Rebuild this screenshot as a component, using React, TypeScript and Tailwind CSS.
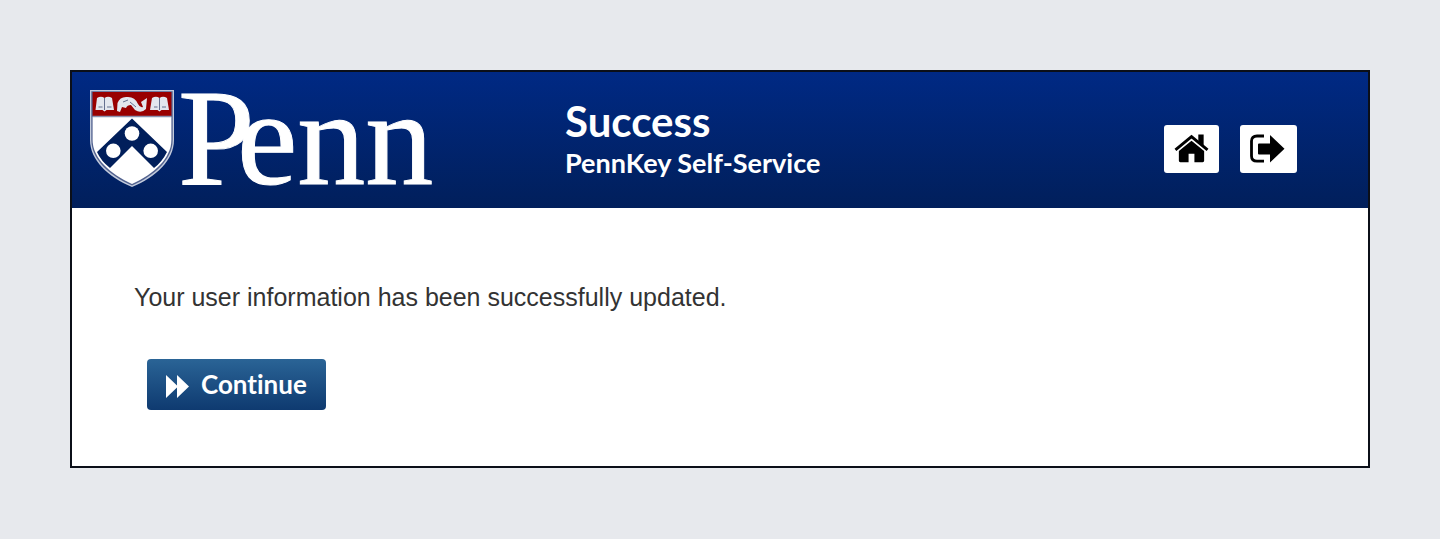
function Logo() {
  return (
    <svg viewBox="0 0 344 98" className="h-[98px] w-[344px] shrink-0 overflow-visible" role="img" aria-label="Penn">
      <path d="M0 -1H84V49C84 69 66 86 42 96C18 86 0 69 0 49Z" fill="#c3cbdc" />
      <path d="M1.3 .3H82.7V49C82.7 68 65 84.500 42 94.500C19 84.500 1.300 68 1.300 49Z" fill="#52628f" />
      <path d="M2.600 26H81.400V49C81.400 67 64 83 42 93C20 83 2.600 67 2.600 49Z" fill="#fff" />
      <path d="M2.600 1H81.400V25H2.600Z" fill="#990000" />
      <path d="M2.600 25.500H81.400" stroke="#8a93b0" strokeWidth="1.500" />
      <path d="M42 27.500L77 61Q72 71 64 77L42 55L20 77Q11 70 7 61Z" fill="#011f5b" />
      <g fill="#fff">
        <circle cx="42" cy="42.500" r="7.300" />
        <circle cx="23.300" cy="59.800" r="7.300" />
        <circle cx="60.700" cy="59.800" r="7.300" />
      </g>
      <g fill="#e3e7ee">
        <path d="M7 7Q11 4.500 14.500 7Q18 4.500 22 7L24 19H16.500L14.500 20.500L12.500 19H5.500Z" />
        <path d="M62 7Q66 4.500 69.500 7Q73 4.500 77 7L79 19H71.500L69.500 20.500L67.500 19H60Z" />
        <path d="M27 20L27.500 12Q30 5 38 6Q45 6 48 13Q50 17 53 16L51 11L57 7L56 18Q51 23 45 19L41 14Q37 14 36 17L32 16L30 21Z" />
      </g>
      <g stroke="#64708f" strokeWidth="1" fill="none">
        <path d="M14.500 7V19M69.500 7V19M8.500 16H12.500M17 16H21.500M64 16H67.500M72 16H76M33 11L38 9M40 11L46 16" />
      </g>
      <text
        x="88"
        y="93"
        fill="#fff"
        stroke="#fff"
        strokeWidth="1"
        className="font-['Liberation_Serif',serif]"
      >
        <tspan fontSize="138">P</tspan>
        <tspan x="147" fontSize="136">enn</tspan>
      </text>
    </svg>
  );
}

function HomeIcon() {
  return (
    <svg viewBox="0 0 36 30" className="h-[30px] w-9" aria-hidden="true">
      <path d="M5 17L18 6.500L31 17V27Q31 28.500 29.500 28.500H21V20H15V28.500H6.500Q5 28.500 5 27Z" />
      <path d="M1.500 15.800L18 2.200L34.500 15.800" fill="none" stroke="#000" strokeWidth="3" />
      <path d="M25 0H30.500V13L25 8.500Z" />
    </svg>
  );
}

function SignOutIcon() {
  return (
    <svg viewBox="0 0 36 30" className="h-[30px] w-9" aria-hidden="true">
      <path d="M14 2H7Q1.500 2 1.500 7V22Q1.500 27.200 7 27.200H14" fill="none" stroke="#000" strokeWidth="2.800" />
      <path d="M9 9.500H20V1L34.500 14.700L20 28.500V20.500H9Q8 20.500 8 19.500V10.500Q8 9.500 9 9.500Z" />
    </svg>
  );
}

export default function App() {
  return (
    <div className="min-h-screen bg-[#e7e9ed] px-[70px] pt-[70px] pb-[70px]">
      <div className="border-2 border-[#0b0f18] bg-white">
        <header className="flex h-[136px] items-center bg-linear-to-b from-[#002984] to-[#011f5b] pr-[71px] pl-[18px] text-white">
          <Logo />
          <div className="ml-[131px] flex-1 font-[Lato,sans-serif] font-bold">
            <h1 className="text-[42px] leading-[46px]">Success</h1>
            <p className="text-[27px] leading-[38px]">PennKey Self-Service</p>
          </div>
          <nav className="mt-[18px] flex gap-[21px]">
            <a href="#home" aria-label="Home" className="flex h-12 w-[55px] items-center rounded-[3px] bg-white px-[10px]">
              <HomeIcon />
            </a>
            <a href="#logout" aria-label="Log out" className="flex h-12 w-[57px] items-center rounded-[3px] bg-white px-[10px]">
              <SignOutIcon />
            </a>
          </nav>
        </header>
        <main className="px-[62px] pt-[71px] pb-14">
          <p className="font-['Liberation_Sans',sans-serif] text-[25px] leading-9 text-[#333]">
            Your user information has been successfully updated.
          </p>
          <button
            type="button"
            className="mt-11 ml-[13px] flex h-[51px] items-center gap-3 rounded-[4px] bg-linear-to-b from-[#2a6496] to-[#0f3a70] px-[19px] font-[Lato,sans-serif] text-[26px] font-bold text-white [font-variant-ligatures:none]"
          >
            <svg viewBox="0 0 23 26" className="h-[26px] w-[23px]" fill="currentColor" aria-hidden="true">
              <path d="M0 3L11 13.500V3L23 14.500L11 26V15.500L0 26Z" />
            </svg>
            Continue
          </button>
        </main>
      </div>
    </div>
  );
}
